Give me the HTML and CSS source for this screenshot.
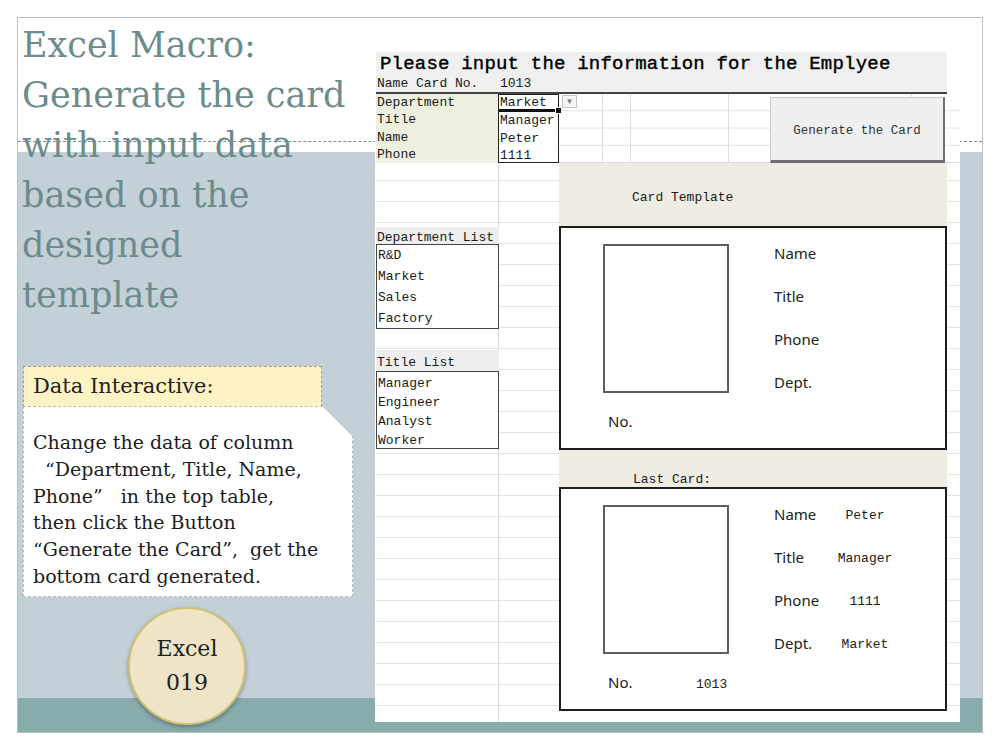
FILE: index.html
```html
<!DOCTYPE html>
<html lang="en">
<head>
    <meta charset="UTF-8">
    <title>Excel Macro - Generate the card</title>
    <link rel="stylesheet" href="styles.css">
</head>
<body>
    <div class="slide">
        <div class="intro">
            <h1 class="intro-title">Excel Macro:<br>Generate the card<br>with input data<br>based on the<br>designed<br>template</h1>

            <div class="note">
                <div class="note-head">Data Interactive:</div>
                <div class="note-body">
                    <p>Change the data of column<br>&nbsp;&nbsp;“Department, Title, Name,<br>Phone”&nbsp;&nbsp; in the top table,<br>then click the Button<br>“Generate the Card”,&nbsp; get the<br>bottom card generated.</p>
                </div>
            </div>

            <div class="badge">Excel<br>019</div>
        </div>

        <div class="sheet">
            <div class="sheet-head">
                <div class="sheet-title">Please input the information for the Emplyee</div>
                <div class="sheet-no"><span class="no-label">Name Card No.</span><span>1013</span></div>
            </div>

            <div class="inputs">
                <div class="input-labels">
                    <div>Department</div>
                    <div>Title</div>
                    <div>Name</div>
                    <div>Phone</div>
                </div>
                <div class="input-values">
                    <div class="cell-active">Market</div>
                    <div>Manager</div>
                    <div>Peter</div>
                    <div>1111</div>
                </div>
                <span class="dropdown">▾</span>
                <div class="gen-btn">Generate the Card</div>
            </div>

            <div class="sheet-body">
                <div class="lists">
                    <div class="list-head list-head-dept">Department List</div>
                    <ul class="list list-dept">
                        <li>R&amp;D</li>
                        <li>Market</li>
                        <li>Sales</li>
                        <li>Factory</li>
                    </ul>
                    <div class="list-head list-head-title">Title List</div>
                    <ul class="list list-title">
                        <li>Manager</li>
                        <li>Engineer</li>
                        <li>Analyst</li>
                        <li>Worker</li>
                    </ul>
                </div>

                <div class="cards">
                    <div class="band band-template">Card Template</div>
                    <div class="card">
                        <div class="card-left">
                            <div class="photo"></div>
                            <div class="card-no"><span class="card-no-label">No.</span><span class="val"></span></div>
                        </div>
                        <div class="card-info">
                            <div class="info-row"><span class="lbl">Name</span><span class="val"></span></div>
                            <div class="info-row"><span class="lbl">Title</span><span class="val"></span></div>
                            <div class="info-row"><span class="lbl">Phone</span><span class="val"></span></div>
                            <div class="info-row"><span class="lbl">Dept.</span><span class="val"></span></div>
                        </div>
                    </div>

                    <div class="band band-last">Last Card:</div>
                    <div class="card card-last">
                        <div class="card-left">
                            <div class="photo"></div>
                            <div class="card-no"><span class="card-no-label">No.</span><span class="val">1013</span></div>
                        </div>
                        <div class="card-info">
                            <div class="info-row"><span class="lbl">Name</span><span class="val">Peter</span></div>
                            <div class="info-row"><span class="lbl">Title</span><span class="val">Manager</span></div>
                            <div class="info-row"><span class="lbl">Phone</span><span class="val">1111</span></div>
                            <div class="info-row"><span class="lbl">Dept.</span><span class="val">Market</span></div>
                        </div>
                    </div>
                </div>
            </div>
        </div>
    </div>
</body>
</html>
```

FILE: styles.css
```css
body {
    margin: 0;
    background-color: #fff;
    font-family: "DejaVu Serif", "Liberation Serif", serif;
}
.slide {
    position: relative;
    display: flex;
    width: 964px;
    height: 714px;
    margin: 17px;
    border: 1px solid #b7c0c0;
    background: linear-gradient(to bottom, #fff 0 134px, #c4d0d7 134px 680px, #88abab 680px);
}
.slide::before { /* dashed rule across the slide */
    content: "";
    position: absolute;
    top: 123px;
    left: 0;
    right: 0;
    border-top: 1px dashed #7e8e8e;
}

/* left side */
.intro {
    position: relative;
    width: 357px;
    flex-shrink: 0;
}
.intro-title {
    margin: 0;
    padding: 2px 0 0 4px;
    font-family: "DejaVu Serif", serif;
    font-weight: normal;
    font-size: 35px;
    line-height: 50px;
    color: #6c8b8b;
}
.note {
    margin: 46px 0 0 5px;
}
.note-head {
    width: 299px;
    height: 41px;
    box-sizing: border-box;
    padding-left: 9px;
    background-color: #fdf3c4;
    border: 1px dashed #aa9f74;
    font-size: 21px;
    line-height: 38px;
    color: #222;
}
.note-body {
    width: 330px;
    height: 191px;
    box-sizing: border-box;
    margin-top: -1px;
    padding: 22px 0 0 9px;
    background-color: #fff;
    border: 1px dashed #b9b9b9;
    clip-path: polygon(0 0, 299px 0, 330px 31px, 330px 100%, 0 100%);
}
.note-body p {
    margin: 0;
    font-size: 19px;
    line-height: 26.8px;
    color: #1d1d1d;
    white-space: nowrap;
}
.badge {
    display: flex;
    align-items: center;
    justify-content: center;
    width: 118px;
    height: 118px;
    box-sizing: border-box;
    margin: 10px 0 0 110px;
    border: 2px solid #cbc377;
    border-radius: 50%;
    background-color: #efe4c5;
    box-shadow: 0 2px 4px rgba(0, 0, 0, 0.3);
    text-align: center;
    font-size: 22px;
    line-height: 34px;
    color: #222;
}

/* spreadsheet */
.sheet {
    position: relative;
    z-index: 1;
    width: 585px;
    height: 672px;
    margin-top: 32px;
    background-color: #fff;
    font-family: "Liberation Mono", "DejaVu Sans Mono", monospace;
    font-size: 13px;
    color: #1a1a1a;
}
.sheet-head {
    width: 571px;
    height: 42px;
    box-sizing: border-box;
    margin: 2px 0 0 1px;
    background-color: #f0f0f0;
    border-bottom: 2px solid #444;
}
.sheet-title {
    height: 26px;
    padding-left: 4px;
    font-size: 19px;
    letter-spacing: 0.2px;
    line-height: 24px;
    color: #000;
    -webkit-text-stroke: 0.4px #000;
}
.sheet-no {
    height: 14px;
    line-height: 12px;
}
.no-label {
    display: inline-block;
    width: 123px;
    padding-left: 1px;
}
.inputs {
    position: relative;
    display: flex;
    height: 69px;
    background:
        linear-gradient(#dedede, #dedede) 227px 0 / 1px 100% no-repeat,
        linear-gradient(#dedede, #dedede) 255px 0 / 1px 100% no-repeat,
        linear-gradient(#dedede, #dedede) 353px 0 / 1px 100% no-repeat,
        linear-gradient(#dedede, #dedede) 536px 0 / 1px 100% no-repeat,
        linear-gradient(to bottom, transparent 16px, #dedede 16px) 0 0 / 100% 17.25px repeat-y,
        #fff;
}
.input-labels {
    width: 122px;
    margin-left: 1px;
    background-color: #eef0df;
}
.input-labels div,
.input-values div {
    height: 17.25px;
    line-height: 18px;
    padding-left: 1px;
}
.input-values {
    width: 61px;
    box-sizing: border-box;
    border: 1px solid #222;
    background-color: #fff;
}
.input-values .cell-active {
    position: relative;
    box-sizing: border-box;
    border-bottom: 3px solid #111;
    line-height: 15px;
}
.input-values .cell-active::after { /* fill handle */
    content: "";
    position: absolute;
    right: -4px;
    bottom: -5px;
    width: 5px;
    height: 5px;
    background-color: #111;
    border: 1px solid #fff;
}
.dropdown {
    position: absolute;
    left: 187px;
    top: 1px;
    width: 15px;
    height: 13px;
    box-sizing: border-box;
    border: 1px solid #c4c4c4;
    background-color: #f6f6f6;
    font-family: "DejaVu Sans", sans-serif;
    font-size: 9px;
    line-height: 11px;
    text-align: center;
    color: #777;
}
.gen-btn {
    width: 175px;
    height: 66px;
    box-sizing: border-box;
    margin: 3px 15px 0 auto;
    background-color: #efefef;
    border: 1px solid #c8c8c8;
    border-right: 2px solid #6e6e6e;
    border-bottom: 3px solid #6e6e6e;
    font-size: 12.5px;
    line-height: 66px;
    text-align: center;
    color: #333;
}
.sheet-body {
    display: flex;
    height: 559px;
    background:
        linear-gradient(#dcdcdc, #dcdcdc) 123px 0 / 1px 100% no-repeat,
        repeating-linear-gradient(to bottom, transparent 0 17px, #e4e4e4 17px 18px, transparent 18px 21px);
}
.lists {
    width: 184px;
    padding-top: 64px;
}
.list-head {
    width: 122px;
    margin-left: 1px;
    padding-left: 1px;
    background-color: #eeeeee;
}
.list-head-dept {
    height: 17px;
    line-height: 21px;
}
.list-head-title {
    height: 21px;
    margin-top: 21px;
    line-height: 26px;
}
.list {
    width: 123px;
    box-sizing: border-box;
    margin: 0 0 0 1px;
    padding: 0 0 0 1px;
    list-style: none;
    border: 1px solid #444;
    background-color: #fff;
}
.list-dept {
    height: 85px;
}
.list-dept li {
    height: 21px;
    line-height: 22px;
}
.list-title {
    height: 78px;
    padding-top: 2px;
}
.list-title li {
    height: 19px;
    line-height: 20px;
}
.cards {
    width: 388px;
}
.band {
    padding-left: 73px;
    background-color: #efede3;
    line-height: 18px;
}
.band-template {
    height: 63px;
    box-sizing: border-box;
    padding-top: 26px;
}
.band-last {
    height: 37px;
    box-sizing: border-box;
    padding-top: 21px;
    padding-left: 74px;
}
.card {
    display: flex;
    height: 224px;
    box-sizing: border-box;
    border: 2px solid #1e1e1e;
    background-color: #fff;
}
.card-left {
    width: 126px;
    margin-left: 42px;
    padding-top: 16px;
}
.photo {
    width: 126px;
    height: 149px;
    box-sizing: border-box;
    border: 2px solid #5e5e5e;
}
.card-no {
    display: flex;
    align-items: center;
    margin-top: 18px;
    padding-left: 5px;
    height: 20px;
    white-space: nowrap;
}
.card-no-label {
    width: 88px;
    font-family: "Noto Sans", "Open Sans", sans-serif;
    font-size: 15px;
}
.card-no .val {
    padding-top: 4px;
}
.card-info {
    margin-left: 45px;
    padding-top: 3px;
}
.info-row {
    display: grid;
    grid-template-columns: 51px 80px;
    align-items: center;
    height: 43px;
}
.lbl {
    font-family: "Noto Sans", "Open Sans", sans-serif;
    font-size: 15px;
    color: #222;
}
.info-row .val {
    padding-top: 4px;
}
.val {
    text-align: center;
}
```
